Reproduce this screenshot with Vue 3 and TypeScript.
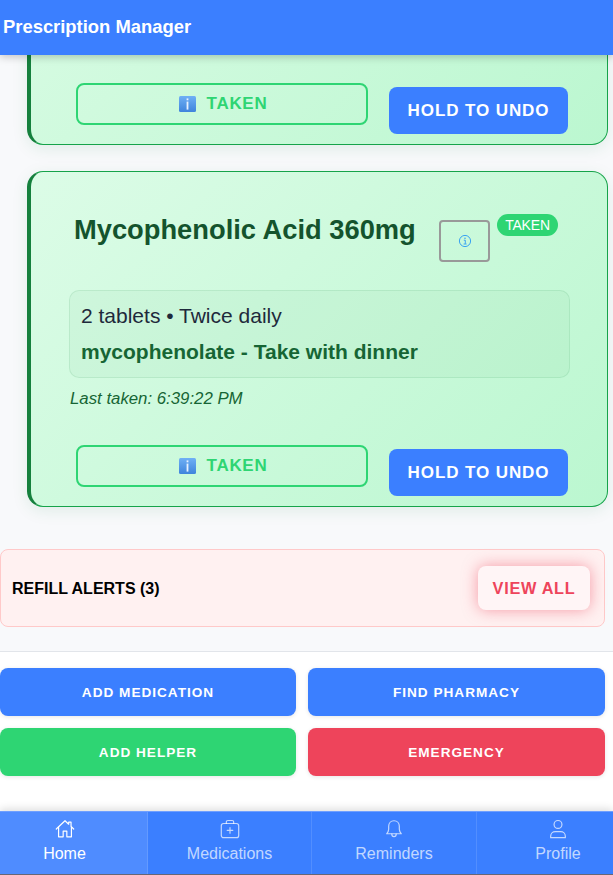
<script setup lang="ts">
interface Med {
  id: number
  name?: string
  dose?: string
  note?: string
  last?: string
}

// The list is scrolled: only the action row of the first card is in view.
const meds: Med[] = [
  { id: 1 },
  { id: 2, name: 'Mycophenolic Acid 360mg', dose: '2 tablets • Twice daily', note: 'mycophenolate - Take with dinner', last: 'Last taken: 6:39:22 PM' },
]

const actions = [
  { label: 'ADD MEDICATION', tone: 'blue' },
  { label: 'FIND PHARMACY', tone: 'blue' },
  { label: 'ADD HELPER', tone: 'green' },
  { label: 'EMERGENCY', tone: 'red' },
]
</script>

<template>
  <div class="page">
    <header class="top">Prescription Manager</header>

    <main class="scroll">
      <div class="meds">
        <article v-for="m in meds" :key="m.id" class="card" :class="{ partial: !m.name }">
          <template v-if="m.name">
            <div class="head">
              <h2 class="name">{{ m.name }}</h2>
              <button class="info" aria-label="Details">
                <svg width="14" height="14" viewBox="0 0 14 14" fill="none">
                  <circle cx="7" cy="7" r="5.6" stroke="#3aa3f2" stroke-width="1" />
                  <path d="M5.8 6.2H7.3V9.8M5.6 10H8.6" stroke="#3aa3f2" stroke-width="1" />
                  <circle cx="7" cy="4.2" r="0.8" fill="#3aa3f2" />
                </svg>
              </button>
              <span class="badge">TAKEN</span>
            </div>
            <div class="details">
              <p class="dose">{{ m.dose }}</p>
              <p class="note">{{ m.note }}</p>
            </div>
            <p class="last">{{ m.last }}</p>
          </template>
          <div class="row">
            <div class="taken">
              <svg width="17" height="18" viewBox="0 0 17 18">
                <defs>
                  <linearGradient :id="`tile${m.id}`" x1="0" y1="0" x2="0" y2="1">
                    <stop offset="0" stop-color="#6fb0f5" />
                    <stop offset="1" stop-color="#3f84dc" />
                  </linearGradient>
                </defs>
                <rect x="0" y="1" width="17" height="16" rx="1.5" :fill="`url(#tile${m.id})`" />
                <rect x="7.6" y="3.4" width="1.8" height="1.9" fill="#e8f2ff" />
                <rect x="7.6" y="6.6" width="1.8" height="8" fill="#e8f2ff" />
              </svg>
              <span>TAKEN</span>
            </div>
            <button class="hold">HOLD TO UNDO</button>
          </div>
        </article>
      </div>

      <section class="alerts">
        <strong class="alert-title">REFILL ALERTS (3)</strong>
        <button class="view">VIEW ALL</button>
      </section>

      <section class="quick">
        <button v-for="a in actions" :key="a.label" class="action" :class="a.tone">{{ a.label }}</button>
      </section>
    </main>

    <nav class="tabs">
      <a class="tab active home">
        <svg width="22" height="22" viewBox="0 0 24 24" fill="none" stroke="currentColor" stroke-width="1.3" stroke-linejoin="round" stroke-linecap="round">
          <path d="M2.5 12 12 3l4 3.8V4.5h2.6v4.8L21.5 12" />
          <path d="M5 10v10.5h5v-6.2h4v6.2h5V10" />
        </svg>
        <span>Home</span>
      </a>
      <a class="tab">
        <svg width="22" height="22" viewBox="0 0 24 24" fill="none" stroke="currentColor" stroke-width="1.3" stroke-linejoin="round" stroke-linecap="round">
          <rect x="2.5" y="6" width="19" height="15.5" rx="2.5" />
          <path d="M8 6V4.3c0-.9.7-1.6 1.6-1.6h4.8c.9 0 1.6.7 1.6 1.6V6M12 10.5v6M9 13.5h6" />
        </svg>
        <span>Medications</span>
      </a>
      <a class="tab">
        <svg width="22" height="22" viewBox="0 0 24 24" fill="none" stroke="currentColor" stroke-width="1.3" stroke-linejoin="round" stroke-linecap="round">
          <path d="M12 3c-3.4 0-5.8 2.7-5.8 6v3.2c0 2-.9 3.4-2.2 5h16c-1.300-1.600-2.200-3-2.200-5V9c0-3.300-2.400-6-5.800-6Z" />
          <path d="M9.600 17.500c0 1.700 1 2.900 2.400 2.900s2.400-1.200 2.400-2.900" />
        </svg>
        <span>Reminders</span>
      </a>
      <a class="tab profile">
        <svg width="22" height="22" viewBox="0 0 24 24" fill="none" stroke="currentColor" stroke-width="1.3" stroke-linejoin="round" stroke-linecap="round">
          <circle cx="12" cy="7" r="4.300" />
          <path d="M4 21.500v-1.700c0-3 2.400-5 5-5h6c2.600 0 5 2 5 5v1.700Z" />
        </svg>
        <span>Profile</span>
      </a>
    </nav>
  </div>
</template>

<style>
html, body { margin: 0; background: #f8f9fb; }
</style>

<style scoped>
.page {
  display: flex;
  flex-direction: column;
  height: 875px;
  overflow: hidden;
  font-family: "Liberation Sans", Arial, sans-serif;
  background: #f8f9fb;
}
.top {
  flex: none;
  position: relative;
  z-index: 2;
  height: 55px;
  display: flex;
  align-items: center;
  padding: 0 0 1px 3px;
  box-sizing: border-box;
  background: #3b7fff;
  color: #fff;
  font-size: 18.4px;
  font-weight: 700;
  box-shadow: 0 2px 8px rgba(0, 0, 0, 0.22);
}
.scroll {
  flex: 1;
  min-height: 0;
  display: flex;
  flex-direction: column;
  justify-content: flex-end;
  overflow: hidden;
}
.meds {
  flex: none;
  display: flex;
  flex-direction: column;
  gap: 26px;
  padding: 0 5px 42px 27px;
}
.card {
  flex: none;
  display: flex;
  flex-direction: column;
  height: 336px;
  box-sizing: border-box;
  padding: 0 0 10px 38px;
  border: 1px solid #16a34a;
  border-left: 4px solid #15803d;
  border-radius: 16px;
  background: linear-gradient(135deg, #dcfce7 0%, #bbf7d0 100%);
  box-shadow: 0 4px 16px rgba(21, 128, 61, 0.1);
}
.partial {
  height: 130px;
  background: linear-gradient(135deg, #d6fbe2 0%, #bbf7d0 100%);
}
.head {
  display: flex;
  align-items: flex-start;
  height: 118px;
  box-sizing: border-box;
  padding: 42px 0 0 5px;
}
.name {
  margin: 0;
  width: 365px;
  flex: none;
  font-size: 27.3px;
  line-height: 32px;
  font-weight: 700;
  color: #14532d;
}
.info {
  flex: none;
  width: 51px;
  height: 42px;
  margin-top: 6px;
  padding: 0;
  display: flex;
  align-items: center;
  justify-content: center;
  background: transparent;
  border: 2px solid #999;
  border-radius: 4px;
}
.badge {
  flex: none;
  margin-left: 7px;
  height: 22px;
  width: 61px;
  display: flex;
  align-items: center;
  justify-content: center;
  border-radius: 11px;
  background: #2ed573;
  color: #fff;
  font-size: 14px;
  letter-spacing: -0.2px;
}
.details {
  width: 501px;
  height: 88px;
  box-sizing: border-box;
  padding: 12px 11px;
  border: 1px solid rgba(21, 128, 61, 0.1);
  border-radius: 10px;
  background: rgba(21, 128, 61, 0.04);
}
.dose {
  margin: 0 0 10px;
  font-size: 21px;
  line-height: 26px;
  color: #1e293b;
}
.note {
  margin: 0;
  font-size: 21px;
  line-height: 26px;
  font-weight: 700;
  color: #166534;
}
.last {
  margin: 11px 0 0 1px;
  font-size: 16.8px;
  line-height: 20px;
  font-style: italic;
  color: #166534;
}
.row {
  display: flex;
  align-items: flex-start;
  gap: 21px;
  margin: auto 0 0 7px;
}
.taken {
  flex: none;
  width: 292px;
  height: 42px;
  box-sizing: border-box;
  padding-left: 2px;
  display: flex;
  align-items: center;
  justify-content: center;
  gap: 11px;
  border: 2px solid #2ed573;
  border-radius: 8px;
  color: #2ed573;
  font-size: 17px;
  font-weight: 700;
  letter-spacing: 0.7px;
}
.hold {
  flex: none;
  width: 179px;
  height: 47px;
  margin-top: 4px;
  padding: 0;
  border: none;
  border-radius: 8px;
  background: #3b7fff;
  color: #fff;
  font-family: inherit;
  font-size: 17px;
  font-weight: 700;
  letter-spacing: 0.9px;
}
.alerts {
  flex: none;
  display: flex;
  align-items: center;
  justify-content: space-between;
  height: 78px;
  width: 605px;
  box-sizing: border-box;
  padding: 0 14px 0 11px;
  border: 1px solid #ffc9c9;
  border-radius: 8px;
  background: #fff1f1;
}
.alert-title {
  margin-top: 2px;
  font-size: 16px;
  color: #000;
}
.view {
  width: 112px;
  height: 44px;
  padding: 0;
  border: none;
  border-radius: 8px;
  background: #fff5f6;
  color: #ee445b;
  font-family: inherit;
  font-size: 16.3px;
  font-weight: 700;
  letter-spacing: 0.7px;
  box-shadow: 0 0 15px rgba(238, 68, 91, 0.5);
}
.quick {
  flex: none;
  display: grid;
  grid-template-columns: 296px 297px;
  grid-auto-rows: 48px;
  gap: 12px;
  margin-top: 24px;
  padding: 16px 8px 35px 0;
  border-top: 1px solid #e2e5ea;
  background: #fff;
}
.action {
  padding: 0;
  border: none;
  border-radius: 8px;
  color: #fff;
  font-family: inherit;
  font-size: 13.6px;
  font-weight: 700;
  letter-spacing: 1px;
  box-shadow: 0 1px 4px rgba(0, 0, 0, 0.1);
}
.blue { background: #3b7fff; }
.green { background: #2ed573; }
.red { background: #ee445b; }
.tabs {
  flex: none;
  position: relative;
  display: grid;
  grid-template-columns: 148px 164px 165px 136px;
  height: 64px;
  box-sizing: border-box;
  border-top: 1px solid #6f9fff;
  border-bottom: 1px solid #667;
  background: #3b7fff;
  box-shadow: 0 -2px 8px rgba(0, 0, 0, 0.14);
}
.tab {
  display: flex;
  flex-direction: column;
  align-items: center;
  padding-top: 6px;
  box-sizing: border-box;
  border-right: 1px solid rgba(255, 255, 255, 0.12);
  color: rgba(255, 255, 255, 0.7);
  font-size: 16px;
  line-height: 20px;
}
.tab svg {
  margin-bottom: 4px;
}
.active {
  color: #fff;
  background: rgba(255, 255, 255, 0.1);
}
.home {
  padding-right: 18px;
}
.profile {
  padding-left: 26px;
  border-right: none;
}
</style>
